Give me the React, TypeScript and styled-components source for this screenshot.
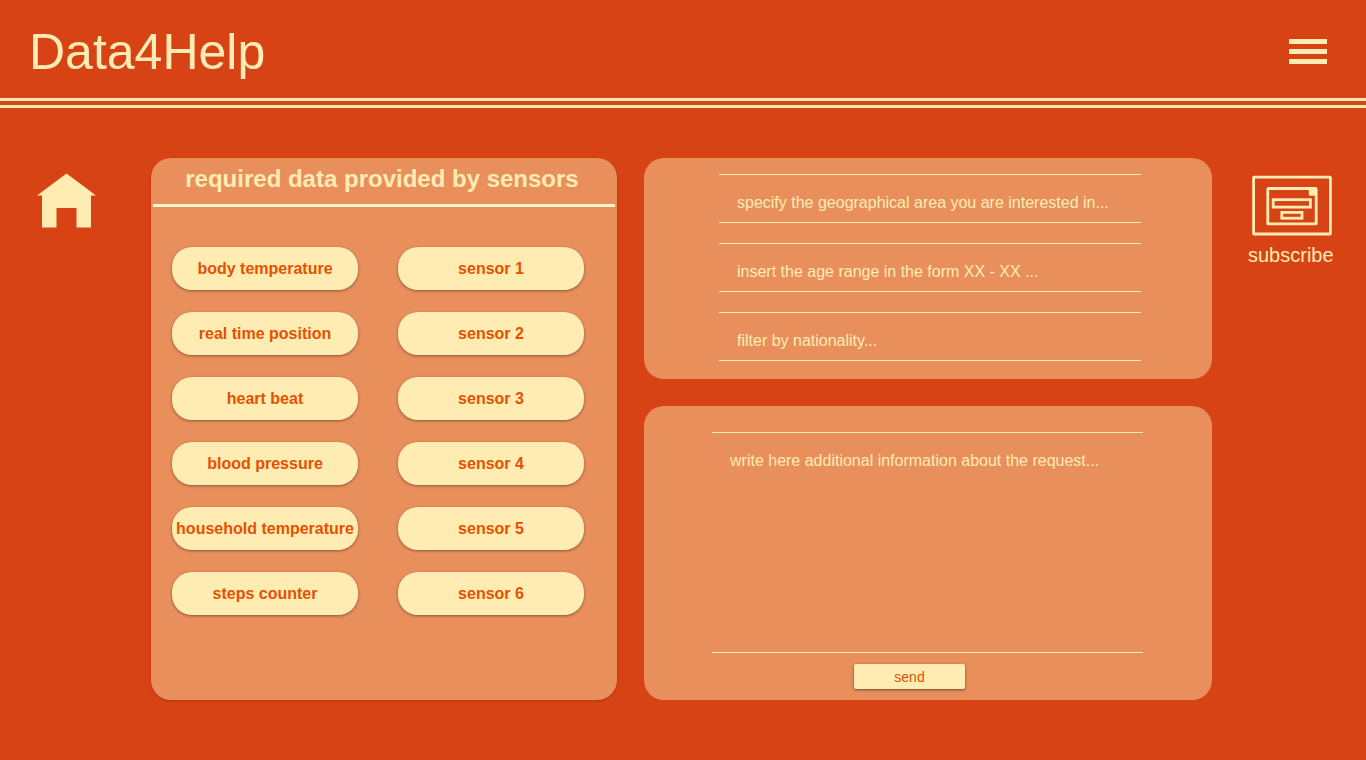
import React from 'react';
import styled, { createGlobalStyle } from 'styled-components';

const cream = '#ffecb3';
const orange = '#d84315';
const panel = '#e98f5c';
const ink = '#e65100';

const GlobalStyle = createGlobalStyle`
  *, *::before, *::after { box-sizing: border-box; }
  body {
    margin: 0;
    background: ${orange};
    color: ${cream};
    font-family: "Liberation Sans", Arial, sans-serif;
    font-size: 16px;
  }
  button, input, textarea { font: inherit; color: inherit; margin: 0; }
`;

const Header = styled.header`
  display: flex;
  align-items: center;
  justify-content: space-between;
  padding: 20px 39px 18px 29px;
  border-bottom: 10px double ${cream};
`;

const Brand = styled.h1`
  margin: 0;
  padding-top: 4px;
  font-size: 50px;
  line-height: 56px;
  font-weight: 400;
`;

const MenuButton = styled.button`
  display: flex;
  flex-direction: column;
  gap: 5px;
  width: 38px;
  padding: 3px 0 0;
  border: 0;
  background: none;
  cursor: pointer;
`;

const Bar = styled.span`
  width: 100%;
  height: 5px;
  background: ${cream};
`;

const Main = styled.main`
  display: grid;
  grid-template-columns: 124px minmax(440px, 466fr) minmax(500px, 568fr) 127px;
  gap: 27px;
  padding: 50px 0 60px;
`;

const HomeLink = styled.a`
  display: block;
  justify-self: start;
  align-self: start;
  padding: 15px 0 0 36px;
`;

const SubscribeButton = styled.button`
  display: flex;
  flex-direction: column;
  align-items: center;
  justify-self: start;
  align-self: start;
  gap: 6px;
  padding: 17px 0 0 9px;
  border: 0;
  background: none;
  font-size: 20px;
  line-height: 24px;
  cursor: pointer;
`;

const Icon = styled.svg`
  display: block;
`;

const Panel = styled.section<{ $raised?: boolean }>`
  background: ${panel};
  border-radius: 20px;
  box-shadow: ${(p) => (p.$raised ? '0 1px 3px rgba(0, 0, 0, 0.2)' : 'none')};
`;

const PanelTitle = styled.h2`
  margin: 0 2px;
  padding: 7px 4px 11px 0;
  border-bottom: 3px solid #fff9c4;
  font-size: 24px;
  line-height: 28px;
  text-align: center;
`;

const SensorGrid = styled.div`
  display: grid;
  grid-template-columns: 1fr 1fr;
  gap: 22px 40px;
  padding: 40px 33px 84px 21px;
`;

const SensorButton = styled.button`
  height: 43px;
  padding: 0;
  border: 0;
  border-radius: 20px;
  background: ${cream};
  color: ${ink};
  font-weight: 700;
  white-space: nowrap;
  box-shadow: 0 1px 3px rgba(0, 0, 0, 0.4);
  cursor: pointer;
`;

const RequestForm = styled.form`
  display: grid;
  grid-template-rows: auto 1fr;
  gap: 27px;
`;

const Filters = styled(Panel)`
  display: flex;
  flex-direction: column;
  gap: 20px;
  padding: 16px 71px 18px 75px;
`;

const Field = styled.input`
  width: 100%;
  height: 49px;
  padding: 8px 18px 0;
  border: solid ${cream};
  border-width: 1px 0;
  border-radius: 0;
  background: none;
  outline: none;
  &::placeholder { color: ${cream}; opacity: 1; }
`;

const Details = styled(Panel)`
  display: flex;
  flex-direction: column;
  align-items: center;
  gap: 11px;
  padding: 26px 69px 11px 68px;
`;

const Notes = styled.textarea`
  display: block;
  flex: 1;
  width: 100%;
  min-height: 221px;
  padding: 18px 18px 0;
  border: solid ${cream};
  border-width: 1px 0;
  border-radius: 0;
  background: none;
  outline: none;
  resize: none;
  line-height: 20px;
  &::placeholder { color: ${cream}; opacity: 1; }
`;

const SendButton = styled.button`
  width: 111px;
  height: 25px;
  margin-right: 36px;
  padding: 0;
  border: 0;
  border-radius: 2px;
  background: ${cream};
  color: ${ink};
  font-size: 14px;
  box-shadow: 0 1px 3px rgba(0, 0, 0, 0.5);
  cursor: pointer;
`;

const sensors = [
  'body temperature', 'sensor 1',
  'real time position', 'sensor 2',
  'heart beat', 'sensor 3',
  'blood pressure', 'sensor 4',
  'household temperature', 'sensor 5',
  'steps counter', 'sensor 6',
];

const filters = [
  { name: 'area', label: 'Geographical area', hint: 'specify the geographical area you are interested in...' },
  { name: 'age', label: 'Age range', hint: 'insert the age range in the form XX - XX ...' },
  { name: 'nationality', label: 'Nationality', hint: 'filter by nationality...' },
];

const HomeIcon = () => (
  <Icon width="61" height="56" viewBox="0 0 61 56" fill={cream} aria-hidden="true">
    <path d="M30.5 0.5 60 22.5H55V54.5H40.5V35H20.5V54.5H6V22.5H1Z" />
  </Icon>
);

const SubscribeIcon = () => (
  <Icon width="84" height="62" viewBox="0 0 84 62" fill="none" stroke={cream} strokeWidth="2.8" aria-hidden="true">
    <rect x="4.6" y="2.2" width="76.8" height="56.8" rx="0.5" />
    <rect x="18.8" y="13.5" width="48.4" height="35.4" rx="0.5" />
    <rect x="24.2" y="24.7" width="37.2" height="7.4" />
    <rect x="32.8" y="37.4" width="20.2" height="5.8" />
    <rect x="59.8" y="14" width="6.6" height="6.8" rx="1.6" fill={cream} stroke="none" />
  </Icon>
);

export default function App() {
  return (
    <>
      <GlobalStyle />
      <Header>
        <Brand>Data4Help</Brand>
        <MenuButton type="button" aria-label="Menu">
          <Bar />
          <Bar />
          <Bar />
        </MenuButton>
      </Header>
      <Main>
        <HomeLink href="#home" aria-label="Home">
          <HomeIcon />
        </HomeLink>
        <Panel $raised>
          <PanelTitle>required data provided by sensors</PanelTitle>
          <SensorGrid>
            {sensors.map((s) => (
              <SensorButton key={s} type="button">{s}</SensorButton>
            ))}
          </SensorGrid>
        </Panel>
        <RequestForm onSubmit={(e) => e.preventDefault()}>
          <Filters>
            {filters.map((f) => (
              <Field key={f.name} name={f.name} type="text" aria-label={f.label} placeholder={f.hint} />
            ))}
          </Filters>
          <Details>
            <Notes
              name="notes"
              aria-label="Additional information"
              placeholder="write here additional information about the request..."
            />
            <SendButton type="submit">send</SendButton>
          </Details>
        </RequestForm>
        <SubscribeButton type="button">
          <SubscribeIcon />
          subscribe
        </SubscribeButton>
      </Main>
    </>
  );
}
